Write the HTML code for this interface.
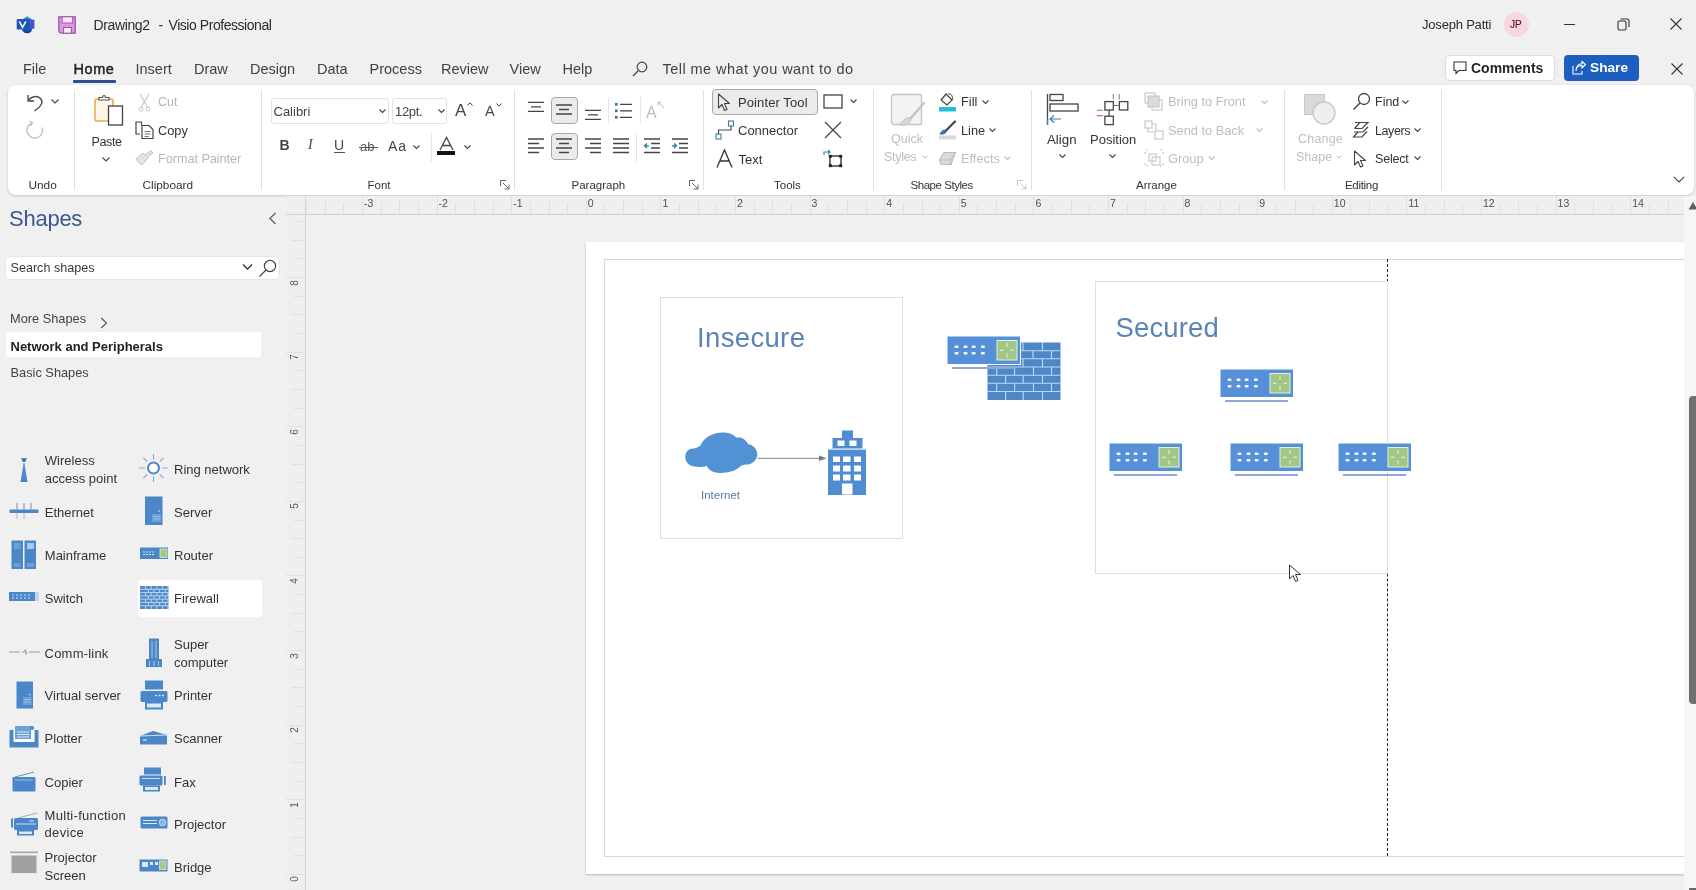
<!DOCTYPE html>
<html><head><meta charset="utf-8">
<style>
*{box-sizing:border-box;margin:0;padding:0}
html,body{width:1696px;height:890px;overflow:hidden;background:#f0f0f0;font-family:"Liberation Sans",sans-serif;color:#262626}
.a{position:absolute}
.t{position:absolute;white-space:nowrap;line-height:1}
svg{position:absolute;overflow:visible}
.dis{color:#b9b9b9}
</style></head><body><div id="root" style="position:absolute;left:0;top:0;width:1696px;height:890px;will-change:transform">

<!-- TITLE BAR -->
<svg style="left:16px;top:15px" width="20" height="20" viewBox="0 0 20 20"><defs><linearGradient id="vg1" x1="0" y1="0" x2="0" y2="1"><stop offset="0" stop-color="#3a8de0"/><stop offset="1" stop-color="#1a3d9c"/></linearGradient></defs>
<path d="M11 1.2 L16 4.5 V14 C16 17 13.5 18.2 11 18.2 C8 18.2 6 16.5 6 14 V5 z" fill="url(#vg1)"/>
<rect x="14" y="4.7" width="4.4" height="9" fill="#4656c4"/>
<rect x="0.7" y="3.9" width="13" height="10.5" rx="1.2" fill="#1f55b0"/>
<path d="M3.3 6.3 L6.6 12.3 L9.9 6.3" stroke="#e6f6ff" stroke-width="1.6" fill="none"/></svg>
<svg style="left:58px;top:16px" width="18" height="18" viewBox="0 0 18 18">
  <path d="M0.8 0.8 H17.2 V17.2 H4 C2 17.2 0.8 16 0.8 14 z" fill="#dc9ade" stroke="#9c52a8" stroke-width="1.3"/>
  <rect x="4.1" y="0.8" width="10.6" height="6.2" fill="#fbe9fb" stroke="#9c52a8" stroke-width="1"/>
  <rect x="5.6" y="11.5" width="7.8" height="5.7" fill="#fbe9fb" stroke="#9c52a8" stroke-width="1"/>
</svg>
<div class="t" style="left:93.5px;top:17.5px;font-size:14px;color:#2b2b2b;letter-spacing:-0.38px">Drawing2</div><div class="t" style="left:158.5px;top:17.5px;font-size:14px;color:#2b2b2b">-</div><div class="t" style="left:168.5px;top:17.5px;font-size:14px;color:#2b2b2b;letter-spacing:-0.45px">Visio Professional</div>
<div class="t" style="left:1422px;top:18px;font-size:13px;color:#2b2b2b;letter-spacing:-0.2px">Joseph Patti</div>
<div class="a" style="left:1504px;top:12px;width:25px;height:25px;border-radius:50%;background:#f6d8de"></div>
<div class="t" style="left:1510px;top:19.5px;font-size:10px;color:#5a1a30;-webkit-text-stroke:0.2px #5a1a30">JP</div>
<div class="a" style="left:1564px;top:24px;width:11px;height:1px;background:#333"></div>
<svg style="left:1617px;top:18px" width="13" height="13" viewBox="0 0 13 13"><rect x="1" y="3" width="8" height="9" rx="1.5" fill="none" stroke="#333" stroke-width="1.1"/><path d="M3.5 1 H10 a2 2 0 0 1 2 2 V9" fill="none" stroke="#333" stroke-width="1.1"/></svg>
<svg style="left:1670px;top:18px" width="12" height="12" viewBox="0 0 12 12"><path d="M0.5 0.5 L11.5 11.5 M11.5 0.5 L0.5 11.5" stroke="#333" stroke-width="1.1"/></svg>

<!-- TABS -->
<div class="t" style="left:23px;top:61.5px;font-size:14.5px;color:#424242">File</div>
<div class="t" style="left:73.5px;top:61.5px;font-size:14.5px;color:#222;letter-spacing:0.55px;-webkit-text-stroke:0.45px #222">Home</div>
<div class="a" style="left:73px;top:80px;width:43px;height:2.5px;background:#2b4f96;border-radius:1px"></div>
<div class="t" style="left:135.5px;top:61.5px;font-size:14.5px;color:#424242">Insert</div>
<div class="t" style="left:194px;top:61.5px;font-size:14.5px;color:#424242">Draw</div>
<div class="t" style="left:250px;top:61.5px;font-size:14.5px;color:#424242">Design</div>
<div class="t" style="left:317px;top:61.5px;font-size:14.5px;color:#424242">Data</div>
<div class="t" style="left:369.5px;top:61.5px;font-size:14.5px;color:#424242">Process</div>
<div class="t" style="left:441px;top:61.5px;font-size:14.5px;color:#424242">Review</div>
<div class="t" style="left:509.5px;top:61.5px;font-size:14.5px;color:#424242">View</div>
<div class="t" style="left:562.5px;top:61.5px;font-size:14.5px;color:#424242">Help</div>
<svg style="left:632px;top:61px" width="16" height="16" viewBox="0 0 16 16"><circle cx="10" cy="6" r="4.8" fill="none" stroke="#444" stroke-width="1.2"/><path d="M6.6 9.4 L1 15" stroke="#444" stroke-width="1.3"/></svg>
<div class="t" style="left:662.5px;top:61.5px;font-size:14.5px;color:#424242;letter-spacing:0.45px">Tell me what you want to do</div>

<div class="a" style="left:1445px;top:55px;width:110px;height:26px;background:#fff;border:1px solid #dcdcdc;border-radius:4px"></div>
<svg style="left:1453px;top:61px" width="14" height="14" viewBox="0 0 14 14"><path d="M1 1 H13 V9.5 H6 L3 12.5 V9.5 H1z" fill="none" stroke="#333" stroke-width="1.1"/></svg>
<div class="t" style="left:1471px;top:61px;font-size:14px;font-weight:700;color:#262626">Comments</div>
<div class="a" style="left:1564px;top:55px;width:75px;height:26px;background:#1c5fbf;border-radius:4px"></div>
<svg style="left:1572px;top:61px" width="14" height="14" viewBox="0 0 14 14"><path d="M1 5 V13 H10 V10" fill="none" stroke="#fff" stroke-width="1.1"/><path d="M4 10 C4 6 7 4.5 10 4.5 V7 L13.5 3.5 L10 0.5 V2.7 C6 2.7 4 6 4 10z" fill="none" stroke="#fff" stroke-width="1.1"/></svg>
<div class="t" style="left:1590px;top:61px;font-size:13.7px;font-weight:700;color:#fff">Share</div>
<svg style="left:1671px;top:63px" width="12" height="12" viewBox="0 0 12 12"><path d="M0.5 0.5 L11.5 11.5 M11.5 0.5 L0.5 11.5" stroke="#333" stroke-width="1.1"/></svg>

<!-- RIBBON -->
<div class="a" style="left:8px;top:85px;width:1686px;height:110px;background:#fff;border-radius:8px;box-shadow:0 1px 3px rgba(0,0,0,0.18)"></div>

<!-- Undo group -->
<svg style="left:25px;top:92px" width="20" height="20" viewBox="0 0 20 20"><path d="M3 3 V9 H9" fill="none" stroke="#444" stroke-width="1.3"/><path d="M3.5 8.5 C6 4 13 3 16 7 C18.5 10.5 16 15 9.5 19" fill="none" stroke="#444" stroke-width="1.3"/></svg>
<svg style="left:51px;top:99px" width="8" height="5" viewBox="0 0 8 5"><path d="M0.5 0.5 L4 4 L7.5 0.5" fill="none" stroke="#444" stroke-width="1.1"/></svg>
<svg style="left:25px;top:120px" width="20" height="20" viewBox="0 0 20 20"><path d="M7 3 C2.5 4.5 1 9 2.5 13 C4 17 9 19 13 17.5 C17 16 18.5 11 17 7.5" fill="none" stroke="#bdbdbd" stroke-width="1.3"/><path d="M4.5 1 L7.5 3.2 L5 6" fill="none" stroke="#bdbdbd" stroke-width="1.3"/></svg>
<div class="t" style="left:28.5px;top:179.5px;font-size:11.8px;color:#333">Undo</div>
<div class="a" style="left:73.5px;top:90px;width:1px;height:100px;background:#e1e1e1"></div>
<!-- Clipboard -->
<svg style="left:93px;top:93px" width="33" height="36" viewBox="0 0 33 36"><rect x="2" y="6" width="18" height="22" rx="1" fill="#fff6e6" stroke="#e6ad4a" stroke-width="1.6"/><path d="M6 7 V4.5 H9.5 C9.5 2 12.5 2 12.5 4.5 H16 V7 z" fill="#fff" stroke="#555" stroke-width="1.1"/><rect x="15.5" y="13" width="14" height="19" fill="#fff" stroke="#444" stroke-width="1.3"/></svg>
<div class="t" style="left:91.5px;top:135.5px;font-size:12.5px;color:#333;letter-spacing:-0.35px">Paste</div>
<svg style="left:102px;top:157px" width="8" height="5" viewBox="0 0 8 5"><path d="M0.5 0.5 L4 4 L7.5 0.5" fill="none" stroke="#444" stroke-width="1.1"/></svg>
<svg style="left:138px;top:93px" width="13" height="19" viewBox="0 0 13 19"><path d="M2 1 L9.5 14 M11 1 L3.5 14" stroke="#c4c4c4" stroke-width="1.1" fill="none"/><circle cx="3" cy="16" r="2" fill="none" stroke="#c4c4c4" stroke-width="1"/><circle cx="10" cy="16" r="2" fill="none" stroke="#c4c4c4" stroke-width="1"/></svg>
<div class="t" style="left:158px;top:96px;font-size:12.5px;color:#b5b5b5">Cut</div>
<svg style="left:135px;top:121px" width="19" height="18" viewBox="0 0 19 18"><path d="M5 13 H1 V1 H6.5 V4" fill="none" stroke="#444" stroke-width="1.2"/><path d="M7 4.5 H14 L18 8.5 V17.5 H7 z" fill="#fff" stroke="#444" stroke-width="1.2"/><path d="M9.5 10.5 H15.5 M9.5 13 H15.5 M9.5 15.5 H14" stroke="#555" stroke-width="0.8"/></svg>
<div class="t" style="left:158px;top:124.5px;font-size:12.8px;color:#333">Copy</div>
<svg style="left:135px;top:150px" width="19" height="17" viewBox="0 0 19 17"><path d="M1 9 L8 3 L13 8 L7 15 C5 13 3 13 1 9z" fill="#e3e3e3" stroke="#c2c2c2" stroke-width="1"/><path d="M10 5 L16 0.5 L18 3 L12.5 7.5" fill="#e3e3e3" stroke="#c2c2c2" stroke-width="1"/></svg>
<div class="t" style="left:158px;top:153px;font-size:12.8px;color:#b8b8b8;letter-spacing:-0.1px">Format Painter</div>
<div class="t" style="left:142.5px;top:179.5px;font-size:11.8px;color:#333">Clipboard</div>
<div class="a" style="left:261px;top:90px;width:1px;height:100px;background:#e1e1e1"></div>
<!-- Font -->
<div class="a" style="left:271px;top:98px;width:118px;height:26px;border:1px solid #e2e2e2;border-radius:3px;background:#fff"></div>
<div class="t" style="left:273.5px;top:104.5px;font-size:13px;color:#444">Calibri</div>
<svg style="left:379px;top:109px" width="7" height="5" viewBox="0 0 7 5"><path d="M0.5 0.5 L3.5 3.5 L6.5 0.5" fill="none" stroke="#444" stroke-width="1.1"/></svg>
<div class="a" style="left:392px;top:98px;width:55px;height:26px;border:1px solid #e2e2e2;border-radius:3px;background:#fff"></div>
<div class="t" style="left:395px;top:104.5px;font-size:13px;color:#444;letter-spacing:-0.3px">12pt.</div>
<svg style="left:437.5px;top:109px" width="7" height="5" viewBox="0 0 7 5"><path d="M0.5 0.5 L3.5 3.5 L6.5 0.5" fill="none" stroke="#444" stroke-width="1.1"/></svg>
<div class="t" style="left:455px;top:101.5px;font-size:17px;color:#444">A</div>
<svg style="left:467px;top:102px" width="6" height="4" viewBox="0 0 6 4"><path d="M0.5 3.5 L3 0.8 L5.5 3.5" fill="none" stroke="#444" stroke-width="1"/></svg>
<div class="t" style="left:485px;top:104px;font-size:14.5px;color:#444">A</div>
<svg style="left:496px;top:102.5px" width="6" height="4" viewBox="0 0 6 4"><path d="M0.5 0.5 L3 3.2 L5.5 0.5" fill="none" stroke="#444" stroke-width="1"/></svg>
<div class="t" style="left:279.5px;top:138px;font-size:14px;font-weight:700;color:#444">B</div>
<div class="t" style="left:308px;top:138px;font-size:14px;font-style:italic;color:#444;font-family:'Liberation Serif'">I</div>
<div class="t" style="left:334px;top:138px;font-size:14px;color:#444">U</div>
<div class="a" style="left:334px;top:152px;width:11px;height:1px;background:#555"></div>
<div class="t" style="left:360px;top:140px;font-size:13px;color:#555">ab</div>
<div class="a" style="left:359px;top:147px;width:19px;height:1px;background:#555"></div>
<div class="t" style="left:388px;top:139px;font-size:14px;color:#444;letter-spacing:1px">Aa</div>
<svg style="left:413px;top:145px" width="7" height="5" viewBox="0 0 7 5"><path d="M0.5 0.5 L3.5 3.5 L6.5 0.5" fill="none" stroke="#444" stroke-width="1.1"/></svg>
<div class="a" style="left:430.5px;top:133px;width:1px;height:29px;background:#e6e6e6"></div>
<svg style="left:437px;top:136px" width="19" height="16" viewBox="0 0 19 16"><path d="M3 14 L9.5 1.5 L16 14 M5.3 9.5 H13.7" fill="none" stroke="#444" stroke-width="1.3"/></svg>
<div class="a" style="left:437px;top:151px;width:18px;height:4px;background:#111"></div>
<svg style="left:464px;top:145px" width="7" height="5" viewBox="0 0 7 5"><path d="M0.5 0.5 L3.5 3.5 L6.5 0.5" fill="none" stroke="#444" stroke-width="1.1"/></svg>
<div class="t" style="left:367.5px;top:179.5px;font-size:11.5px;color:#333">Font</div>
<svg style="left:500px;top:180px" width="10" height="10" viewBox="0 0 10 10"><path d="M0.5 6 V0.5 H6" fill="none" stroke="#666" stroke-width="1"/><path d="M3 3 L9 9 M9 4.5 V9 H4.5" fill="none" stroke="#666" stroke-width="1"/></svg>
<div class="a" style="left:513.5px;top:90px;width:1px;height:100px;background:#e1e1e1"></div>

<!-- Paragraph -->
<svg style="left:527px;top:101px" width="18" height="12" viewBox="0 0 18 12"><path d="M1 1.3 H17 M4 5.8 H14 M1 10.3 H17" stroke="#444" stroke-width="1.3"/></svg>
<div class="a" style="left:551px;top:97px;width:27px;height:27px;border:1px solid #a8a8a8;border-radius:4px;background:#ebebeb"></div>
<svg style="left:555px;top:104px" width="18" height="12" viewBox="0 0 18 12"><path d="M1 1 H17 M4 5.5 H14 M1 10 H17" stroke="#444" stroke-width="1.3"/></svg>
<svg style="left:584px;top:109px" width="18" height="12" viewBox="0 0 18 12"><path d="M1 1.3 H17 M4 5.8 H14 M1 10.3 H17" stroke="#444" stroke-width="1.3"/></svg>
<div class="a" style="left:608px;top:97px;width:1px;height:27px;background:#e6e6e6"></div>
<svg style="left:614px;top:102px" width="19" height="16" viewBox="0 0 19 16"><rect x="1" y="1" width="2.6" height="2.6" fill="#3c6e8c"/><rect x="1" y="7.5" width="2.6" height="2.6" fill="#3c6e8c"/><rect x="1" y="14" width="2.6" height="2.6" fill="#3c6e8c"/><path d="M6 2.3 H18 M6 8.8 H18 M6 15.3 H18" stroke="#444" stroke-width="1.3"/></svg>
<div class="a" style="left:639.5px;top:97px;width:1px;height:27px;background:#e6e6e6"></div>
<div class="t" style="left:646px;top:105px;font-size:16px;color:#bcbcbc">A</div>
<svg style="left:657px;top:101px" width="8" height="8" viewBox="0 0 8 8"><path d="M1 4.5 V1 H4.5 M1 1 L7 7" fill="none" stroke="#bcbcbc" stroke-width="1"/></svg>
<svg style="left:527px;top:138px" width="18" height="16" viewBox="0 0 18 16"><path d="M1 1 H17 M1 5.5 H12 M1 10 H17 M1 14.5 H12" stroke="#444" stroke-width="1.3"/></svg>
<div class="a" style="left:551px;top:133px;width:27px;height:27px;border:1px solid #a8a8a8;border-radius:4px;background:#ebebeb"></div>
<svg style="left:555px;top:138px" width="18" height="16" viewBox="0 0 18 16"><path d="M1 1 H17 M4 5.5 H14 M1 10 H17 M4 14.5 H14" stroke="#444" stroke-width="1.3"/></svg>
<svg style="left:584px;top:138px" width="18" height="16" viewBox="0 0 18 16"><path d="M1 1 H17 M6 5.5 H17 M1 10 H17 M6 14.5 H17" stroke="#444" stroke-width="1.3"/></svg>
<svg style="left:612px;top:138px" width="18" height="16" viewBox="0 0 18 16"><path d="M1 1 H17 M1 5.5 H17 M1 10 H17 M1 14.5 H17" stroke="#444" stroke-width="1.3"/></svg>
<div class="a" style="left:636px;top:133px;width:1px;height:29px;background:#e6e6e6"></div>
<svg style="left:643px;top:138px" width="18" height="16" viewBox="0 0 18 16"><path d="M1 1 H17 M8 5.5 H17 M8 10 H17 M1 14.5 H17" stroke="#444" stroke-width="1.3"/><path d="M6 7.8 H1.5 M4 5.5 L1.5 7.8 L4 10" fill="none" stroke="#2e7d9a" stroke-width="1.3"/></svg>
<svg style="left:671px;top:138px" width="18" height="16" viewBox="0 0 18 16"><path d="M1 1 H17 M8 5.5 H17 M8 10 H17 M1 14.5 H17" stroke="#444" stroke-width="1.3"/><path d="M1 7.8 H5.5 M3 5.5 L5.5 7.8 L3 10" fill="none" stroke="#2e7d9a" stroke-width="1.3"/></svg>
<div class="t" style="left:571.5px;top:179.5px;font-size:11.5px;color:#333">Paragraph</div>
<svg style="left:689px;top:180px" width="10" height="10" viewBox="0 0 10 10"><path d="M0.5 6 V0.5 H6" fill="none" stroke="#666" stroke-width="1"/><path d="M3 3 L9 9 M9 4.5 V9 H4.5" fill="none" stroke="#666" stroke-width="1"/></svg>
<div class="a" style="left:702.5px;top:90px;width:1px;height:100px;background:#e1e1e1"></div>
<!-- Tools -->
<div class="a" style="left:712px;top:89px;width:106px;height:26px;border:1px solid #a8a8a8;border-radius:4px;background:#ebebeb"></div>
<svg style="left:717px;top:93px" width="14" height="19" viewBox="0 0 14 19"><path d="M1.5 1 V15 L5 11.5 L7.5 17.5 L10 16.5 L7.5 10.5 H12.5 z" fill="none" stroke="#444" stroke-width="1.1" stroke-linejoin="round"/></svg>
<div class="t" style="left:738px;top:96px;font-size:13px;color:#333;letter-spacing:0.1px">Pointer Tool</div>
<svg style="left:823px;top:94px" width="20" height="15" viewBox="0 0 20 15"><rect x="1" y="1" width="18" height="13" fill="none" stroke="#444" stroke-width="1.3"/></svg>
<svg style="left:850px;top:99px" width="7" height="5" viewBox="0 0 7 5"><path d="M0.5 0.5 L3.5 3.5 L6.5 0.5" fill="none" stroke="#444" stroke-width="1.1"/></svg>
<svg style="left:715px;top:120px" width="20" height="20" viewBox="0 0 20 20"><rect x="1" y="14" width="5" height="5" fill="none" stroke="#3c7f9c" stroke-width="1.1"/><rect x="13.5" y="1" width="5" height="5" fill="none" stroke="#3c7f9c" stroke-width="1.1"/><path d="M3.5 14 V10 H16 V6" fill="none" stroke="#444" stroke-width="1.1"/></svg>
<div class="t" style="left:738px;top:124px;font-size:13px;color:#333">Connector</div>
<svg style="left:824px;top:121px" width="18" height="18" viewBox="0 0 18 18"><path d="M1 1 L17 17 M17 1 L1 17" stroke="#444" stroke-width="1.2"/></svg>
<svg style="left:716px;top:149px" width="17" height="19" viewBox="0 0 17 19"><path d="M1 18.5 L8.5 1 L16 18.5 M3.8 12 H13.2" fill="none" stroke="#333" stroke-width="1.3"/></svg>
<div class="t" style="left:738.5px;top:152.5px;font-size:13px;color:#333">Text</div>
<svg style="left:823px;top:149px" width="20" height="19" viewBox="0 0 20 19"><rect x="7" y="7" width="11" height="10" fill="none" stroke="#222" stroke-width="1.3"/><rect x="5.8" y="5.8" width="3" height="3" fill="#222"/><rect x="16.2" y="5.8" width="3" height="3" fill="#222"/><rect x="5.8" y="15.2" width="3" height="3" fill="#222"/><rect x="16.2" y="15.2" width="3" height="3" fill="#222"/><path d="M1 6 V3 H7 M5 1 L7 3 L5 5" fill="none" stroke="#3c7f9c" stroke-width="1.1"/></svg>
<div class="t" style="left:774px;top:179.5px;font-size:11.5px;color:#333">Tools</div>
<div class="a" style="left:872.5px;top:90px;width:1px;height:100px;background:#e1e1e1"></div>
<!-- Shape Styles -->
<svg style="left:890px;top:93px" width="36" height="35" viewBox="0 0 36 35"><rect x="1.5" y="1.5" width="30" height="30" rx="2" fill="#f3f3f3" stroke="#c4c4c4" stroke-width="1.3"/><path d="M34 10 L20 26" stroke="#c4c4c4" stroke-width="2.5" stroke-linecap="round"/><path d="M20 25 C16 24 12 28 10 32 C15 33 20 31 21 27z" fill="#d6d6d6" stroke="#c4c4c4" stroke-width="1"/></svg>
<div class="t" style="left:891px;top:133.2px;font-size:12.5px;color:#bdbdbd">Quick</div>
<div class="t" style="left:884px;top:151px;font-size:12.5px;color:#bdbdbd;letter-spacing:-0.3px">Styles</div>
<svg style="left:922px;top:155px" width="6" height="4" viewBox="0 0 6 4"><path d="M0.5 0.5 L3 3 L5.5 0.5" fill="none" stroke="#bdbdbd" stroke-width="1"/></svg>
<svg style="left:938px;top:92px" width="19" height="20" viewBox="0 0 19 20"><path d="M3 8 L8 2 L14 8 L9 13 z" fill="#fff" stroke="#444" stroke-width="1.2"/><path d="M10 2 C13 1 15 4 14.5 8" fill="none" stroke="#444" stroke-width="1"/><rect x="1" y="15" width="17" height="4.5" fill="#20c0d8"/></svg>
<div class="t" style="left:961px;top:96px;font-size:12.8px;color:#333">Fill</div>
<svg style="left:982px;top:99.5px" width="7" height="5" viewBox="0 0 7 5"><path d="M0.5 0.5 L3.5 3.5 L6.5 0.5" fill="none" stroke="#444" stroke-width="1.1"/></svg>
<svg style="left:938px;top:120px" width="19" height="20" viewBox="0 0 19 20"><path d="M17 1.5 L7.5 11" stroke="#444" stroke-width="2.2" stroke-linecap="round"/><path d="M7 10 C4.5 10 3 12 2 14 C5 14.5 8 13.5 8.5 11.5z" fill="#3a78c0" stroke="#2d5f9c" stroke-width="0.8"/><rect x="1" y="15.5" width="17" height="4" fill="#d8d8d8"/></svg>
<div class="t" style="left:961px;top:124.5px;font-size:12.8px;color:#333">Line</div>
<svg style="left:989px;top:127.5px" width="7" height="5" viewBox="0 0 7 5"><path d="M0.5 0.5 L3.5 3.5 L6.5 0.5" fill="none" stroke="#444" stroke-width="1.1"/></svg>
<svg style="left:938px;top:151px" width="19" height="15" viewBox="0 0 19 15"><path d="M1.5 9 L6 1.5 H17.5 L13 13.5 H3 z" fill="#dadada" stroke="#bdbdbd" stroke-width="1.1"/><path d="M1.5 9 L12 9 L17.5 1.5 M12 9 L13 13.5" fill="none" stroke="#bdbdbd" stroke-width="1"/></svg>
<div class="t" style="left:961px;top:152.5px;font-size:12.8px;color:#bdbdbd">Effects</div>
<svg style="left:1004px;top:156px" width="7" height="5" viewBox="0 0 7 5"><path d="M0.5 0.5 L3.5 3.5 L6.5 0.5" fill="none" stroke="#bdbdbd" stroke-width="1.1"/></svg>
<div class="t" style="left:910.5px;top:179.5px;font-size:11.5px;color:#333;letter-spacing:-0.45px">Shape Styles</div>
<svg style="left:1017px;top:180px" width="10" height="10" viewBox="0 0 10 10"><path d="M0.5 6 V0.5 H6" fill="none" stroke="#c8c8c8" stroke-width="1"/><path d="M3 3 L9 9 M9 4.5 V9 H4.5" fill="none" stroke="#c8c8c8" stroke-width="1"/></svg>
<div class="a" style="left:1030.5px;top:90px;width:1px;height:100px;background:#e1e1e1"></div>
<!-- Arrange -->
<svg style="left:1046px;top:93px" width="34" height="34" viewBox="0 0 34 34"><path d="M1.5 1 V32" stroke="#444" stroke-width="1.3"/><path d="M1.5 26 V32" stroke="#3a7fc0" stroke-width="1.3"/><rect x="4" y="1.5" width="13" height="6" fill="none" stroke="#444" stroke-width="1.3"/><rect x="4" y="11" width="28" height="7" fill="none" stroke="#444" stroke-width="1.3"/><path d="M15 26 H4 M8 22.5 L4 26 L8 29.5" fill="none" stroke="#3a7fc0" stroke-width="1.2"/></svg>
<div class="t" style="left:1047px;top:132.5px;font-size:13.3px;color:#333">Align</div>
<svg style="left:1059px;top:154px" width="7" height="5" viewBox="0 0 7 5"><path d="M0.5 0.5 L3.5 3.5 L6.5 0.5" fill="none" stroke="#444" stroke-width="1.1"/></svg>
<svg style="left:1096px;top:93px" width="34" height="34" viewBox="0 0 34 34"><rect x="8.9" y="8.6" width="8.4" height="8.4" fill="none" stroke="#444" stroke-width="1.3"/><rect x="23.4" y="8.6" width="8.4" height="8.4" fill="none" stroke="#444" stroke-width="1.3"/><rect x="8.9" y="23.2" width="8.4" height="8.4" fill="none" stroke="#444" stroke-width="1.3"/><path d="M13.1 17 V23.2" stroke="#444" stroke-width="1.2"/><path d="M17.3 12.5 H23.4" stroke="#b05a60" stroke-width="1.1"/><path d="M17.3 1 V6.5 M23.2 1 V6.5" stroke="#777" stroke-width="1"/><path d="M0.7 17.3 H6.9" stroke="#888" stroke-width="1"/><path d="M0.7 22.7 H6.9" stroke="#c0504d" stroke-width="1"/></svg>
<div class="t" style="left:1090px;top:132.5px;font-size:13px;color:#333">Position</div>
<svg style="left:1109px;top:154px" width="7" height="5" viewBox="0 0 7 5"><path d="M0.5 0.5 L3.5 3.5 L6.5 0.5" fill="none" stroke="#444" stroke-width="1.1"/></svg>
<svg style="left:1144px;top:92px" width="20" height="20" viewBox="0 0 20 20"><rect x="1" y="1" width="10" height="10" fill="none" stroke="#c4c4c4" stroke-width="1.1"/><rect x="4" y="4" width="11" height="11" fill="#dcdcdc" stroke="#c4c4c4" stroke-width="1.1"/><path d="M15 8 H18 V18 H8 V15" fill="none" stroke="#c4c4c4" stroke-width="1.1"/></svg>
<div class="t" style="left:1168px;top:96px;font-size:12.8px;color:#bdbdbd">Bring to Front</div>
<svg style="left:1261px;top:99.5px" width="7" height="5" viewBox="0 0 7 5"><path d="M0.5 0.5 L3.5 3.5 L6.5 0.5" fill="none" stroke="#bdbdbd" stroke-width="1.1"/></svg>
<svg style="left:1144px;top:120px" width="20" height="20" viewBox="0 0 20 20"><rect x="1" y="1" width="7" height="7" fill="none" stroke="#c4c4c4" stroke-width="1.1"/><rect x="11" y="11" width="8" height="8" fill="none" stroke="#c4c4c4" stroke-width="1.1"/><path d="M8 4 H12 V11 M4 8 V12 H11" fill="none" stroke="#c4c4c4" stroke-width="1.1"/></svg>
<div class="t" style="left:1168px;top:124.5px;font-size:12.8px;color:#bdbdbd">Send to Back</div>
<svg style="left:1256px;top:127.5px" width="7" height="5" viewBox="0 0 7 5"><path d="M0.5 0.5 L3.5 3.5 L6.5 0.5" fill="none" stroke="#bdbdbd" stroke-width="1.1"/></svg>
<svg style="left:1144px;top:149px" width="20" height="19" viewBox="0 0 20 19"><path d="M2 1 H4 M16 1 H18 M2 17 H4 M16 17 H18 M1 3 V5 M1 14 V16 M19 3 V5 M19 14 V16" stroke="#c4c4c4" stroke-width="1.1"/><rect x="5" y="5" width="7" height="7" fill="none" stroke="#c4c4c4" stroke-width="1.1"/><rect x="8" y="8" width="8" height="8" fill="none" stroke="#c4c4c4" stroke-width="1.1"/></svg>
<div class="t" style="left:1168px;top:152.5px;font-size:12.8px;color:#bdbdbd">Group</div>
<svg style="left:1208px;top:156px" width="7" height="5" viewBox="0 0 7 5"><path d="M0.5 0.5 L3.5 3.5 L6.5 0.5" fill="none" stroke="#bdbdbd" stroke-width="1.1"/></svg>
<div class="t" style="left:1136px;top:179.5px;font-size:11.5px;color:#333">Arrange</div>
<svg style="left:1019px;top:180px;display:none" width="10" height="10"></svg>
<div class="a" style="left:1283.5px;top:90px;width:1px;height:100px;background:#e1e1e1"></div>
<!-- Editing -->
<svg style="left:1303px;top:93px" width="34" height="34" viewBox="0 0 34 34"><rect x="1.5" y="1.5" width="20" height="20" fill="#d9d9d9" stroke="#c8c8c8" stroke-width="1"/><circle cx="21" cy="20" r="11" fill="#efefef" stroke="#c8c8c8" stroke-width="1.3"/></svg>
<div class="t" style="left:1298px;top:133px;font-size:12.5px;color:#c0c0c0;letter-spacing:0.2px">Change</div>
<div class="t" style="left:1296px;top:151px;font-size:12.5px;color:#c0c0c0">Shape</div>
<svg style="left:1336px;top:155px" width="6" height="4" viewBox="0 0 6 4"><path d="M0.5 0.5 L3 3 L5.5 0.5" fill="none" stroke="#c0c0c0" stroke-width="1"/></svg>
<svg style="left:1352px;top:92px" width="19" height="19" viewBox="0 0 19 19"><circle cx="12" cy="7" r="5.5" fill="none" stroke="#444" stroke-width="1.3"/><path d="M8 11 L1.5 17.5" stroke="#444" stroke-width="1.4"/></svg>
<div class="t" style="left:1375px;top:96px;font-size:12.5px;color:#333">Find</div>
<svg style="left:1402px;top:99.5px" width="7" height="5" viewBox="0 0 7 5"><path d="M0.5 0.5 L3.5 3.5 L6.5 0.5" fill="none" stroke="#444" stroke-width="1.1"/></svg>
<svg style="left:1352px;top:121px" width="18" height="18" viewBox="0 0 18 18"><path d="M3 1.5 H16 L10 7.5 H2.5 M16 6 L11 11 H2 M15 10.5 L10 16 H1.5 L6 11 M2.5 7.5 L7.5 2" fill="none" stroke="#444" stroke-width="1.2"/></svg>
<div class="t" style="left:1375px;top:124.5px;font-size:12.5px;color:#333;letter-spacing:-0.4px">Layers</div>
<svg style="left:1414px;top:127.5px" width="7" height="5" viewBox="0 0 7 5"><path d="M0.5 0.5 L3.5 3.5 L6.5 0.5" fill="none" stroke="#444" stroke-width="1.1"/></svg>
<svg style="left:1353px;top:150px" width="14" height="18" viewBox="0 0 14 18"><path d="M1.5 1 V15 L5 11.5 L7.5 17 L10 16 L7.5 10.5 H12.5 z" fill="none" stroke="#444" stroke-width="1.1" stroke-linejoin="round"/></svg>
<div class="t" style="left:1375px;top:152.5px;font-size:12.5px;color:#333;letter-spacing:-0.2px">Select</div>
<svg style="left:1414px;top:156px" width="7" height="5" viewBox="0 0 7 5"><path d="M0.5 0.5 L3.5 3.5 L6.5 0.5" fill="none" stroke="#444" stroke-width="1.1"/></svg>
<div class="t" style="left:1345px;top:179.5px;font-size:11.5px;color:#333;letter-spacing:-0.3px">Editing</div>
<div class="a" style="left:1441px;top:90px;width:1px;height:100px;background:#e1e1e1"></div>
<svg style="left:1673px;top:176px" width="12" height="8" viewBox="0 0 12 8"><path d="M0.8 0.8 L6 6 L11.2 0.8" fill="none" stroke="#444" stroke-width="1.2"/></svg>

<!-- SHAPES PANEL -->
<!-- SHAPES PANEL CONTENT -->
<div class="t" style="left:9px;top:207.5px;font-size:22px;color:#3d5890;letter-spacing:-0.25px">Shapes</div>
<svg style="left:268px;top:212px" width="9" height="13" viewBox="0 0 9 13"><path d="M7.5 1 L1.8 6.5 L7.5 12" fill="none" stroke="#555" stroke-width="1.1"/></svg>
<div class="a" style="left:6px;top:257px;width:273px;height:22px;background:#fff;border-radius:4px;box-shadow:0 0 0 1px #e6e6e6"></div>
<div class="t" style="left:10.5px;top:261.5px;font-size:12.6px;color:#3a3a3a">Search shapes</div>
<svg style="left:242px;top:263px" width="11" height="8" viewBox="0 0 11 8"><path d="M1 1.5 L5.5 6 L10 1.5" fill="none" stroke="#333" stroke-width="1.3"/></svg>
<svg style="left:258px;top:259px" width="19" height="19" viewBox="0 0 19 19"><circle cx="12" cy="7" r="5.6" fill="none" stroke="#444" stroke-width="1.2"/><path d="M8 11 L1.5 17.5" stroke="#444" stroke-width="1.3"/></svg>
<div class="t" style="left:10px;top:313px;font-size:12.8px;color:#444">More Shapes</div>
<svg style="left:100px;top:317px" width="8" height="12" viewBox="0 0 8 12"><path d="M1.2 1 L6.5 6 L1.2 11" fill="none" stroke="#555" stroke-width="1.1"/></svg>
<div class="a" style="left:6px;top:332px;width:255px;height:25px;background:#fff;border-radius:2px"></div>
<div class="t" style="left:10.5px;top:339.5px;font-size:13px;font-weight:700;color:#222">Network and Peripherals</div>
<div class="t" style="left:10.5px;top:366.5px;font-size:12.8px;color:#444">Basic Shapes</div>

<div class="a" style="left:137.5px;top:579.5px;width:124px;height:37px;background:#fff;border-radius:3px"></div>

<div class="t" style="left:44.8px;top:452px;font-size:13px;color:#333;line-height:17.5px">Wireless<br>access point</div>
<div class="t" style="left:174px;top:462.8px;font-size:13px;color:#333">Ring network</div>
<div class="t" style="left:44.8px;top:505.5px;font-size:13px;color:#333">Ethernet</div>
<div class="t" style="left:174px;top:505.5px;font-size:13px;color:#333">Server</div>
<div class="t" style="left:44.8px;top:548.8px;font-size:13px;color:#333">Mainframe</div>
<div class="t" style="left:174px;top:548.8px;font-size:13px;color:#333">Router</div>
<div class="t" style="left:44.8px;top:591.5px;font-size:13px;color:#333">Switch</div>
<div class="t" style="left:174px;top:591.5px;font-size:13px;color:#333">Firewall</div>
<div class="t" style="left:44.6px;top:646.9px;font-size:13px;color:#333;letter-spacing:0.2px">Comm-link</div>
<div class="t" style="left:174px;top:636.1px;font-size:13px;color:#333;line-height:17.6px">Super<br>computer</div>
<div class="t" style="left:44.6px;top:689.4px;font-size:13px;color:#333">Virtual server</div>
<div class="t" style="left:174px;top:689.4px;font-size:13px;color:#333">Printer</div>
<div class="t" style="left:44.6px;top:731.8px;font-size:13px;color:#333">Plotter</div>
<div class="t" style="left:174px;top:731.8px;font-size:13px;color:#333">Scanner</div>
<div class="t" style="left:44.6px;top:775.8px;font-size:13px;color:#333">Copier</div>
<div class="t" style="left:174px;top:775.8px;font-size:13px;color:#333">Fax</div>
<div class="t" style="left:44.6px;top:806.9px;font-size:13px;color:#333;line-height:17.6px;letter-spacing:0.3px">Multi-function<br>device</div>
<div class="t" style="left:174px;top:817.7px;font-size:13px;color:#333">Projector</div>
<div class="t" style="left:44.6px;top:849.3px;font-size:13px;color:#333;line-height:17.6px">Projector<br>Screen</div>
<div class="t" style="left:174px;top:860.7px;font-size:13px;color:#333">Bridge</div>

<!-- shape icons -->
<svg style="left:19px;top:457px" width="10" height="26" viewBox="0 0 10 26"><path d="M5 4 L1.5 25 H8.5 z" fill="#4a86c8"/><circle cx="5" cy="3" r="2" fill="#3d6fa8"/><path d="M2 1 L5 4 L8 1" fill="none" stroke="#3d6fa8" stroke-width="1"/></svg>
<svg style="left:138px;top:453px" width="31" height="30" viewBox="0 0 31 30"><circle cx="15.5" cy="15" r="5.5" fill="#fff" stroke="#4a86c8" stroke-width="2"/><path d="M15.5 1 V6.5 M15.5 23.5 V29 M1 15 H7 M24 15 H30 M5.5 5 L9 8.5 M22 21.5 L25.5 25 M25.5 5 L22 8.5 M9 21.5 L5.5 25" stroke="#8aaed8" stroke-width="1.2"/></svg>
<svg style="left:9px;top:502px" width="30" height="19" viewBox="0 0 30 19"><rect x="0.5" y="7.5" width="29" height="3.5" rx="1" fill="#4a86c8"/><path d="M8 1 V7.5 M15 1 V7.5 M22 1 V7.5" stroke="#6a8fbf" stroke-width="1"/><path d="M8 11 V17 M15 11 V17" stroke="#b0b8c4" stroke-width="1"/></svg>
<svg style="left:145px;top:496px" width="18" height="29" viewBox="0 0 18 29"><rect x="0" y="0.5" width="17.5" height="28.5" fill="#4a86c8"/><rect x="7" y="18" width="9" height="8" fill="#6ea0d8"/><path d="M8 20.5 H15 M8 23 H15" stroke="#a5c4e8" stroke-width="0.8"/><circle cx="14" cy="15" r="1" fill="#a5c4e8"/></svg>
<svg style="left:11px;top:540px" width="26" height="29" viewBox="0 0 26 29"><rect x="0.5" y="0.5" width="11.5" height="28.5" fill="#4a86c8"/><rect x="13.5" y="0.5" width="11.5" height="28.5" fill="#4a86c8"/><rect x="16" y="3" width="7" height="6" fill="#a8c8ec"/><rect x="3" y="3" width="6.5" height="6" fill="#6ea0d8"/><rect x="3" y="23" width="6.5" height="4" fill="#6ea0d8"/><rect x="16" y="23" width="7" height="4" fill="#6ea0d8"/></svg>
<svg style="left:140px;top:547px" width="28" height="13" viewBox="0 0 28 13"><rect x="0" y="0.5" width="28" height="11.5" fill="#4a86c8"/><rect x="20" y="2" width="7" height="8.5" fill="#a8c88a" stroke="#d8f0c8" stroke-width="0.8"/><path d="M3 5 H5 M6 5 H8 M9 5 H11 M12 5 H14 M3 7.5 H5 M6 7.5 H8 M9 7.5 H11 M12 7.5 H14" stroke="#cfe2f6" stroke-width="1.2"/></svg>
<svg style="left:9px;top:592px" width="30" height="9" viewBox="0 0 30 9"><rect x="0" y="0" width="26" height="9" fill="#4a86c8"/><rect x="26" y="0" width="4" height="9" fill="#c0d4ea"/><path d="M3 3 H5 M7 3 H9 M11 3 H13 M15 3 H17 M19 3 H21 M3 6 H5 M7 6 H9 M11 6 H13 M15 6 H17 M19 6 H21" stroke="#cfe2f6" stroke-width="1.2"/></svg>
<svg style="left:140px;top:586.3px" width="29" height="23" viewBox="0 0 29 23"><rect x="0" y="0" width="28.5" height="23" fill="#5088c8"/><path d="M0 3.29 H29 M0 6.57 H29 M0 9.86 H29 M0 13.14 H29 M0 16.43 H29 M0 19.71 H29 M5.60 0.00 V3.29 M11.20 0.00 V3.29 M16.80 0.00 V3.29 M22.40 0.00 V3.29 M28.00 0.00 V3.29 M8.40 3.29 V6.57 M14.00 3.29 V6.57 M19.60 3.29 V6.57 M25.20 3.29 V6.57 M5.60 6.57 V9.86 M11.20 6.57 V9.86 M16.80 6.57 V9.86 M22.40 6.57 V9.86 M28.00 6.57 V9.86 M8.40 9.86 V13.14 M14.00 9.86 V13.14 M19.60 9.86 V13.14 M25.20 9.86 V13.14 M5.60 13.14 V16.43 M11.20 13.14 V16.43 M16.80 13.14 V16.43 M22.40 13.14 V16.43 M28.00 13.14 V16.43 M8.40 16.43 V19.71 M14.00 16.43 V19.71 M19.60 16.43 V19.71 M25.20 16.43 V19.71 M5.60 19.71 V23.00 M11.20 19.71 V23.00 M16.80 19.71 V23.00 M22.40 19.71 V23.00 M28.00 19.71 V23.00" stroke="#c2dcf4" stroke-width="0.9"/></svg>
<svg style="left:9px;top:648px" width="31" height="8" viewBox="0 0 31 8"><path d="M0 4 H11 M20 4 H31" stroke="#8a9aae" stroke-width="1"/><path d="M13 4 H15 L16.5 1.5 L17 6.5 L18 4" fill="none" stroke="#8a9aae" stroke-width="1"/></svg>
<svg style="left:145px;top:638px" width="18" height="29" viewBox="0 0 18 29"><rect x="4" y="0.5" width="10" height="21" fill="#4a86c8"/><path d="M7 3 V20 M11 3 V20" stroke="#a8c8ec" stroke-width="1"/><path d="M1 21 H17 L17 29 H1 z" fill="#4a86c8"/><path d="M4.5 23 V28 M9 23 V28 M13.5 23 V28" stroke="#a8c8ec" stroke-width="1"/></svg>
<svg style="left:15.5px;top:681px" width="18" height="28" viewBox="0 0 18 28"><rect x="0.5" y="0.5" width="16.5" height="27" fill="#4a86c8"/><rect x="7" y="16" width="8.5" height="8" fill="#6ea0d8"/><path d="M8 18.5 H15 M8 21 H15" stroke="#a5c4e8" stroke-width="0.8"/><circle cx="13.5" cy="13.5" r="1" fill="#a5c4e8"/></svg>
<svg style="left:140px;top:680px" width="28" height="30" viewBox="0 0 28 30"><rect x="5" y="0.5" width="18" height="9" fill="#4a86c8"/><rect x="0.5" y="11" width="27" height="11" rx="1.5" fill="#4a86c8"/><rect x="5" y="22" width="18" height="7.5" fill="#4a86c8"/><rect x="7" y="23.5" width="14" height="4" fill="#dbe8f6"/><path d="M15 15.5 H17 M18.5 15.5 H20.5 M22 15.5 H24" stroke="#cfe2f6" stroke-width="1.3"/></svg>
<svg style="left:9px;top:725px" width="30" height="23" viewBox="0 0 30 23"><rect x="0.5" y="5" width="29" height="17.5" fill="#4a86c8"/><rect x="4.5" y="5" width="21" height="12" fill="#fff"/><rect x="6" y="1" width="16" height="13" fill="#6ea0d8"/><path d="M8 7 H20 M8 9.5 H20 M8 12 H20" stroke="#dbe8f6" stroke-width="1"/><circle cx="23" cy="3" r="2" fill="#4a86c8"/></svg>
<svg style="left:139px;top:730px" width="29" height="15" viewBox="0 0 29 15"><path d="M1 6 L14 1 L28 5 V14.5 H1 z" fill="#4a86c8"/><path d="M1 6 L28 5" stroke="#cfe2f6" stroke-width="1"/><path d="M4 10 H8" stroke="#cfe2f6" stroke-width="1.3"/></svg>
<svg style="left:12px;top:771px" width="24" height="21" viewBox="0 0 24 21"><rect x="0.5" y="6" width="23" height="14.5" rx="1" fill="#4a86c8"/><path d="M3 6 L22 1" stroke="#6f8fb8" stroke-width="1"/><path d="M3 9 H21" stroke="#a8c8ec" stroke-width="0.8"/></svg>
<svg style="left:139px;top:767px" width="28" height="25" viewBox="0 0 28 25"><rect x="5" y="0.5" width="17" height="7" fill="#4a86c8"/><rect x="0.5" y="8.5" width="23" height="10" rx="1.5" fill="#4a86c8"/><rect x="25" y="9" width="1.8" height="9" fill="#4a86c8"/><rect x="4" y="18.5" width="17" height="6" fill="#4a86c8"/><rect x="6" y="20" width="13" height="3" fill="#dbe8f6"/><path d="M3 11.5 H21" stroke="#dbe8f6" stroke-width="0.9"/></svg>
<svg style="left:10px;top:812px" width="29" height="24" viewBox="0 0 29 24"><path d="M1 7 L3 6 L3 16 L1 15z" fill="#4a86c8"/><rect x="4" y="6" width="24" height="12" rx="1.5" fill="#4a86c8"/><path d="M8 6 L27 1" stroke="#8aa3c4" stroke-width="0.9"/><rect x="7" y="18" width="17" height="5.5" fill="#4a86c8"/><rect x="9" y="19.5" width="13" height="2.5" fill="#dbe8f6"/><path d="M19 9 H24" stroke="#cfe2f6" stroke-width="1.1"/><path d="M6 12 H26" stroke="#dbe8f6" stroke-width="0.9"/></svg>
<svg style="left:140px;top:816px" width="28" height="13" viewBox="0 0 28 13"><rect x="0.5" y="0.5" width="27" height="12" rx="1.5" fill="#4a86c8"/><path d="M3 4.5 H17 M3 7.5 H17" stroke="#dbe8f6" stroke-width="1.1"/><circle cx="22.5" cy="6.5" r="3.3" fill="#8ab4e2" stroke="#dbe8f6" stroke-width="0.8"/></svg>
<svg style="left:10px;top:851px" width="28" height="22" viewBox="0 0 28 22"><rect x="0" y="0.5" width="28" height="1.6" fill="#9aa6b4"/><rect x="1.5" y="4.5" width="25" height="17.5" fill="#a0a0a0"/></svg>
<svg style="left:139px;top:859px" width="29" height="13" viewBox="0 0 29 13"><rect x="0.5" y="0.5" width="28" height="12" fill="#4a86c8"/><rect x="3" y="3" width="6" height="5" fill="#dbe8f6"/><rect x="11" y="3" width="3" height="3" fill="#dbe8f6"/><rect x="16" y="3" width="3" height="3" fill="#dbe8f6"/><rect x="20.5" y="2" width="6.5" height="8.5" fill="#a8c88a" stroke="#d8f0c8" stroke-width="0.8"/></svg>

<!-- RULERS -->
<div class="a" style="left:286px;top:196px;width:1398px;height:19px;background:#efefef"></div>
<div class="a" style="left:286px;top:214px;width:1398px;height:1px;background:#d2d2d2"></div>
<div class="a" style="left:286px;top:215px;width:19px;height:675px;background:#efefef"></div>
<div class="a" style="left:305px;top:196px;width:1px;height:694px;background:#d2d2d2"></div>
<svg style="left:0;top:0" width="1696" height="890"><path d="M306.5 203 V214 M325.2 200 V214 M343.8 203 V214 M362.5 196 V214 M381.1 203 V214 M399.8 200 V214 M418.4 203 V214 M437.1 196 V214 M455.8 203 V214 M474.4 200 V214 M493.0 203 V214 M511.7 196 V214 M530.3 203 V214 M549.0 200 V214 M567.6 203 V214 M586.3 196 V214 M604.9 203 V214 M623.6 200 V214 M642.2 203 V214 M660.9 196 V214 M679.5 203 V214 M698.2 200 V214 M716.8 203 V214 M735.5 196 V214 M754.1 203 V214 M772.8 200 V214 M791.4 203 V214 M810.1 196 V214 M828.8 203 V214 M847.4 200 V214 M866.0 203 V214 M884.7 196 V214 M903.3 203 V214 M922.0 200 V214 M940.6 203 V214 M959.3 196 V214 M977.9 203 V214 M996.6 200 V214 M1015.2 203 V214 M1033.9 196 V214 M1052.5 203 V214 M1071.2 200 V214 M1089.8 203 V214 M1108.5 196 V214 M1127.1 203 V214 M1145.8 200 V214 M1164.4 203 V214 M1183.1 196 V214 M1201.8 203 V214 M1220.4 200 V214 M1239.0 203 V214 M1257.7 196 V214 M1276.3 203 V214 M1295.0 200 V214 M1313.6 203 V214 M1332.3 196 V214 M1350.9 203 V214 M1369.6 200 V214 M1388.2 203 V214 M1406.9 196 V214 M1425.5 203 V214 M1444.2 200 V214 M1462.8 203 V214 M1481.5 196 V214 M1500.1 203 V214 M1518.8 200 V214 M1537.4 203 V214 M1556.1 196 V214 M1574.8 203 V214 M1593.4 200 V214 M1612.0 203 V214 M1630.7 196 V214 M1649.3 203 V214 M1668.0 200 V214" stroke="#e0e0e0" stroke-width="1" shape-rendering="crispEdges"/></svg>
<div class="t" style="left:364.0px;top:198px;font-size:10.5px;color:#505050">-3</div>
<div class="t" style="left:438.6px;top:198px;font-size:10.5px;color:#505050">-2</div>
<div class="t" style="left:513.2px;top:198px;font-size:10.5px;color:#505050">-1</div>
<div class="t" style="left:587.8px;top:198px;font-size:10.5px;color:#505050">0</div>
<div class="t" style="left:662.4px;top:198px;font-size:10.5px;color:#505050">1</div>
<div class="t" style="left:737.0px;top:198px;font-size:10.5px;color:#505050">2</div>
<div class="t" style="left:811.6px;top:198px;font-size:10.5px;color:#505050">3</div>
<div class="t" style="left:886.2px;top:198px;font-size:10.5px;color:#505050">4</div>
<div class="t" style="left:960.8px;top:198px;font-size:10.5px;color:#505050">5</div>
<div class="t" style="left:1035.4px;top:198px;font-size:10.5px;color:#505050">6</div>
<div class="t" style="left:1110.0px;top:198px;font-size:10.5px;color:#505050">7</div>
<div class="t" style="left:1184.6px;top:198px;font-size:10.5px;color:#505050">8</div>
<div class="t" style="left:1259.2px;top:198px;font-size:10.5px;color:#505050">9</div>
<div class="t" style="left:1333.8px;top:198px;font-size:10.5px;color:#505050">10</div>
<div class="t" style="left:1408.4px;top:198px;font-size:10.5px;color:#505050">11</div>
<div class="t" style="left:1483.0px;top:198px;font-size:10.5px;color:#505050">12</div>
<div class="t" style="left:1557.6px;top:198px;font-size:10.5px;color:#505050">13</div>
<div class="t" style="left:1632.2px;top:198px;font-size:10.5px;color:#505050">14</div>
<svg style="left:0;top:0" width="1696" height="890"><path d="M286 874.3 H305 M294 855.6 H305 M291 837.0 H305 M294 818.3 H305 M286 799.7 H305 M294 781.0 H305 M291 762.4 H305 M294 743.8 H305 M286 725.1 H305 M294 706.4 H305 M291 687.8 H305 M294 669.1 H305 M286 650.5 H305 M294 631.8 H305 M291 613.2 H305 M294 594.5 H305 M286 575.9 H305 M294 557.2 H305 M291 538.6 H305 M294 520.0 H305 M286 501.3 H305 M294 482.6 H305 M291 464.0 H305 M294 445.3 H305 M286 426.7 H305 M294 408.1 H305 M291 389.4 H305 M294 370.8 H305 M286 352.1 H305 M294 333.5 H305 M291 314.8 H305 M294 296.1 H305 M286 277.5 H305 M294 258.9 H305 M291 240.2 H305 M294 221.5 H305" stroke="#e0e0e0" stroke-width="1" shape-rendering="crispEdges"/></svg>
<div class="t" style="left:285.8px;top:873.3px;width:20px;height:12px;text-align:center;font-size:10px;color:#5a5a5a;transform:rotate(-90deg)">0</div>
<div class="t" style="left:285.8px;top:798.7px;width:20px;height:12px;text-align:center;font-size:10px;color:#5a5a5a;transform:rotate(-90deg)">1</div>
<div class="t" style="left:285.8px;top:724.1px;width:20px;height:12px;text-align:center;font-size:10px;color:#5a5a5a;transform:rotate(-90deg)">2</div>
<div class="t" style="left:285.8px;top:649.5px;width:20px;height:12px;text-align:center;font-size:10px;color:#5a5a5a;transform:rotate(-90deg)">3</div>
<div class="t" style="left:285.8px;top:574.9px;width:20px;height:12px;text-align:center;font-size:10px;color:#5a5a5a;transform:rotate(-90deg)">4</div>
<div class="t" style="left:285.8px;top:500.3px;width:20px;height:12px;text-align:center;font-size:10px;color:#5a5a5a;transform:rotate(-90deg)">5</div>
<div class="t" style="left:285.8px;top:425.7px;width:20px;height:12px;text-align:center;font-size:10px;color:#5a5a5a;transform:rotate(-90deg)">6</div>
<div class="t" style="left:285.8px;top:351.1px;width:20px;height:12px;text-align:center;font-size:10px;color:#5a5a5a;transform:rotate(-90deg)">7</div>
<div class="t" style="left:285.8px;top:276.5px;width:20px;height:12px;text-align:center;font-size:10px;color:#5a5a5a;transform:rotate(-90deg)">8</div>
<!-- CANVAS -->
<!-- page -->
<div class="a" style="left:586px;top:242px;width:1098px;height:632px;background:#fff;box-shadow:0 0.5px 2px rgba(0,0,0,0.25)"></div>
<div class="a" style="left:604px;top:258.5px;width:1090px;height:598px;border:1px solid #d9d9d9;border-right:none"></div>
<!-- dashed page break -->
<div class="a" style="left:1387px;top:259px;width:0;height:597px;border-left:1px dashed #222"></div>
<!-- Insecure -->
<div class="a" style="left:660px;top:296.5px;width:243px;height:242px;border:1px solid #dedede"></div>
<div class="t" style="left:697px;top:324px;font-size:27.5px;color:#5a83b8;letter-spacing:0.35px">Insecure</div>
<svg style="left:684px;top:430px" width="76" height="45" viewBox="0 0 76 45"><path d="M1.3 27 C1.3 21.5 5 18.4 9 18.4 C12 18.4 14.5 17 16.5 15.5 C19 8 28 2.4 39.3 2.4 C45 2.4 50 4.5 52.5 7.8 C56 7 61 8.5 64 14 C69 15 73.3 19 73.3 24 C73.3 30 68 34.6 63 34.6 C61.5 34.6 58 35 56 36.5 C52 41 44 43 36 42.9 C30 42.9 25 41 22.6 35.8 C20 37 18 37 16.4 37 C12 37 7.5 36 5.5 35 C2.5 33 1.3 30 1.3 27z" fill="#5391d5"/></svg>
<svg style="left:757px;top:453px" width="71" height="11" viewBox="0 0 71 11"><path d="M0.5 5.3 H63" stroke="#858585" stroke-width="1"/><path d="M62 2.6 L69.5 5.3 L62 8 z" fill="#7a7a7a"/></svg>
<svg style="left:828px;top:430px" width="39" height="66" viewBox="0 0 39 66"><rect x="14" y="0.5" width="11" height="7.5" fill="#4f8dd3"/><rect x="4.5" y="8" width="30" height="10.5" fill="#4f8dd3"/><rect x="0" y="20" width="38" height="45" fill="#4f8dd3"/><rect x="9.5" y="10.5" width="7" height="5.5" fill="#fff"/><rect x="21.5" y="10.5" width="7" height="5.5" fill="#fff"/><g fill="#fff"><rect x="5" y="26.5" width="7" height="5.5"/><rect x="15" y="26.5" width="7.5" height="5.5"/><rect x="26" y="26.5" width="7" height="5.5"/><rect x="5" y="35.5" width="7" height="6"/><rect x="15" y="35.5" width="7.5" height="6"/><rect x="26" y="35.5" width="7" height="6"/><rect x="5" y="44.5" width="7" height="6"/><rect x="15" y="44.5" width="7.5" height="6"/><rect x="26" y="44.5" width="7" height="6"/><rect x="14" y="53.5" width="10.5" height="11"/></g><path d="M0 19.3 H38" stroke="#a9c7ea" stroke-width="1"/></svg>
<div class="t" style="left:701px;top:489.8px;font-size:11.5px;color:#5b7ca6">Internet</div>

<!-- Router+firewall -->
<svg style="left:987px;top:342px" width="74" height="58" viewBox="0 0 74 58"><rect x="0.5" y="0.5" width="73" height="57.5" fill="#4f86c6"/><g stroke="#b8dcf8" stroke-width="1.1"><path d="M0.5 8.7 H74 M0.5 16.8 H74 M0.5 25 H74 M0.5 33.2 H74 M0.5 41.3 H74 M0.5 49.5 H74"/><path d="M36 0 V8.7 M55.5 0 V8.7 M46 8.7 V16.8 M64.5 8.7 V16.8 M36 16.8 V25 M55.5 16.8 V25 M9.7 25 V33.2 M27.6 25 V33.2 M46.5 25 V33.2 M64.5 25 V33.2 M18.6 33.2 V41.3 M36.2 33.2 V41.3 M55.5 33.2 V41.3 M9.7 41.3 V49.5 M27.6 41.3 V49.5 M46.5 41.3 V49.5 M64.5 41.3 V49.5 M18.6 49.5 V58 M36.2 49.5 V58 M55.5 49.5 V58"/></g></svg>

<svg style="left:946px;top:335px" width="76" height="36" viewBox="-1 -1 76 36"><rect x="0" y="0" width="73.5" height="28.5" fill="#5590d8" stroke="#fff" stroke-width="1"/><rect x="50" y="4.5" width="20" height="19.5" fill="#a3c585" stroke="#dff5d6" stroke-width="1"/><g fill="#fff" opacity="0.95"><rect x="7.5" y="9.5" width="4" height="2.6" rx="1"/><rect x="16.5" y="9.5" width="4" height="2.6" rx="1"/><rect x="24.6" y="9.5" width="4" height="2.6" rx="1"/><rect x="33.9" y="9.5" width="4" height="2.6" rx="1"/><rect x="7.5" y="16" width="4" height="2.6" rx="1"/><rect x="16.5" y="16" width="4" height="2.6" rx="1"/><rect x="24.6" y="16" width="4" height="2.6" rx="1"/><rect x="33.9" y="16" width="4" height="2.6" rx="1"/></g><g stroke="#f0ffe8" stroke-width="0.9" fill="none"><path d="M60 7 V11 M60 21.5 V17.5 M53 14.2 H56.5 M67 14.2 H63.5"/></g><rect x="5" y="31" width="63" height="2" fill="#8ea8d6"/></svg>
<!-- Secured -->
<div class="a" style="left:1095px;top:281px;width:293px;height:293px;border:1px solid #dedede;background:#fff"></div>
<div class="t" style="left:1115.5px;top:314px;font-size:27.5px;color:#5a83b8;letter-spacing:0.15px">Secured</div>
<svg style="left:1219px;top:367.5px" width="76" height="36" viewBox="-1 -1 76 36"><rect x="0" y="0" width="73.5" height="28.5" fill="#5590d8" stroke="#fff" stroke-width="1"/><rect x="50" y="4.5" width="20" height="19.5" fill="#a3c585" stroke="#dff5d6" stroke-width="1"/><g fill="#fff" opacity="0.95"><rect x="7.5" y="9.5" width="4" height="2.6" rx="1"/><rect x="16.5" y="9.5" width="4" height="2.6" rx="1"/><rect x="24.6" y="9.5" width="4" height="2.6" rx="1"/><rect x="33.9" y="9.5" width="4" height="2.6" rx="1"/><rect x="7.5" y="16" width="4" height="2.6" rx="1"/><rect x="16.5" y="16" width="4" height="2.6" rx="1"/><rect x="24.6" y="16" width="4" height="2.6" rx="1"/><rect x="33.9" y="16" width="4" height="2.6" rx="1"/></g><g stroke="#f0ffe8" stroke-width="0.9" fill="none"><path d="M60 7 V11 M60 21.5 V17.5 M53 14.2 H56.5 M67 14.2 H63.5"/></g><rect x="5" y="31" width="63" height="2" fill="#8ea8d6"/></svg>
<svg style="left:1107.5px;top:441.6px" width="76" height="36" viewBox="-1 -1 76 36"><rect x="0" y="0" width="73.5" height="28.5" fill="#5590d8" stroke="#fff" stroke-width="1"/><rect x="50" y="4.5" width="20" height="19.5" fill="#a3c585" stroke="#dff5d6" stroke-width="1"/><g fill="#fff" opacity="0.95"><rect x="7.5" y="9.5" width="4" height="2.6" rx="1"/><rect x="16.5" y="9.5" width="4" height="2.6" rx="1"/><rect x="24.6" y="9.5" width="4" height="2.6" rx="1"/><rect x="33.9" y="9.5" width="4" height="2.6" rx="1"/><rect x="7.5" y="16" width="4" height="2.6" rx="1"/><rect x="16.5" y="16" width="4" height="2.6" rx="1"/><rect x="24.6" y="16" width="4" height="2.6" rx="1"/><rect x="33.9" y="16" width="4" height="2.6" rx="1"/></g><g stroke="#f0ffe8" stroke-width="0.9" fill="none"><path d="M60 7 V11 M60 21.5 V17.5 M53 14.2 H56.5 M67 14.2 H63.5"/></g><rect x="5" y="31" width="63" height="2" fill="#8ea8d6"/></svg>
<svg style="left:1228.8px;top:441.6px" width="76" height="36" viewBox="-1 -1 76 36"><rect x="0" y="0" width="73.5" height="28.5" fill="#5590d8" stroke="#fff" stroke-width="1"/><rect x="50" y="4.5" width="20" height="19.5" fill="#a3c585" stroke="#dff5d6" stroke-width="1"/><g fill="#fff" opacity="0.95"><rect x="7.5" y="9.5" width="4" height="2.6" rx="1"/><rect x="16.5" y="9.5" width="4" height="2.6" rx="1"/><rect x="24.6" y="9.5" width="4" height="2.6" rx="1"/><rect x="33.9" y="9.5" width="4" height="2.6" rx="1"/><rect x="7.5" y="16" width="4" height="2.6" rx="1"/><rect x="16.5" y="16" width="4" height="2.6" rx="1"/><rect x="24.6" y="16" width="4" height="2.6" rx="1"/><rect x="33.9" y="16" width="4" height="2.6" rx="1"/></g><g stroke="#f0ffe8" stroke-width="0.9" fill="none"><path d="M60 7 V11 M60 21.5 V17.5 M53 14.2 H56.5 M67 14.2 H63.5"/></g><rect x="5" y="31" width="63" height="2" fill="#8ea8d6"/></svg>
<svg style="left:1337.2px;top:441.6px" width="76" height="36" viewBox="-1 -1 76 36"><rect x="0" y="0" width="73.5" height="28.5" fill="#5590d8" stroke="#fff" stroke-width="1"/><rect x="50" y="4.5" width="20" height="19.5" fill="#a3c585" stroke="#dff5d6" stroke-width="1"/><g fill="#fff" opacity="0.95"><rect x="7.5" y="9.5" width="4" height="2.6" rx="1"/><rect x="16.5" y="9.5" width="4" height="2.6" rx="1"/><rect x="24.6" y="9.5" width="4" height="2.6" rx="1"/><rect x="33.9" y="9.5" width="4" height="2.6" rx="1"/><rect x="7.5" y="16" width="4" height="2.6" rx="1"/><rect x="16.5" y="16" width="4" height="2.6" rx="1"/><rect x="24.6" y="16" width="4" height="2.6" rx="1"/><rect x="33.9" y="16" width="4" height="2.6" rx="1"/></g><g stroke="#f0ffe8" stroke-width="0.9" fill="none"><path d="M60 7 V11 M60 21.5 V17.5 M53 14.2 H56.5 M67 14.2 H63.5"/></g><rect x="5" y="31" width="63" height="2" fill="#8ea8d6"/></svg>
<svg style="left:1288px;top:564px" width="14" height="19" viewBox="0 0 14 19"><path d="M1.5 1 V15 L5 11.5 L7.5 17.5 L10 16.5 L7.5 10.5 H12.5 z" fill="#fff" stroke="#333" stroke-width="1" stroke-linejoin="round"/></svg>
<!-- scrollbar -->
<div class="a" style="left:1684px;top:196px;width:12px;height:694px;background:#f6f6f6"></div>
<svg style="left:1688px;top:201px" width="9" height="9" viewBox="0 0 9 9"><path d="M0.5 8.5 L5 1 L9.5 8.5 z" fill="#5f5f5f"/></svg>
<div class="a" style="left:1689px;top:395.5px;width:10px;height:308px;background:#707070;border-radius:4px"></div>
<div class="a" style="left:1689px;top:888px;width:8px;height:3px;background:#6a6a6a;border-radius:1px"></div>

</div></body></html>
